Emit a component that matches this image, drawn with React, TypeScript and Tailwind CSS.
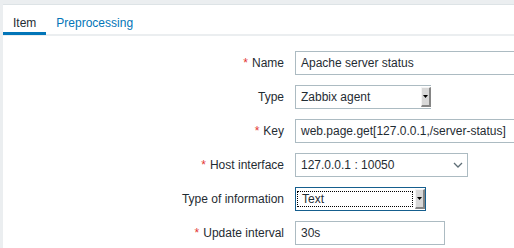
import React from "react";

const Label = ({ text, req }: { text: string; req?: boolean }) => (
  <div className="w-[292px] shrink-0 pr-[11px] text-right whitespace-nowrap">
    {req && <span className="text-[#e33734] mr-[4px]">*</span>}
    {text}
  </div>
);

const NativeArrow = () => (
  <div className="w-[10px] self-stretch my-[1px] flex items-center justify-center bg-[#d8d8d8] border-t border-l border-[#f4f4f4] border-r-2 border-b-2 border-r-[#858585] border-b-[#858585]">
    <svg width="5" height="3" viewBox="0 0 5 3">
      <polygon points="0,0 5,0 2.5,3" fill="#000" />
    </svg>
  </div>
);

const App: React.FC = () => {
  return (
    <div className="w-[514px] h-[248px] overflow-hidden bg-[#ebeef0] pl-[3px] pt-[4px] font-['Liberation_Sans',Arial,sans-serif] text-[12px] text-[#1f2c33]">
      <div className="h-full bg-white border-t border-[#dde3e6]">
        <div className="flex h-[31px] border-b-2 border-[#ebeef0]">
          <div className="h-[30px] px-[10px] pt-[9px] border-b-[3px] border-[#0275b8]">Item</div>
          <div className="h-[30px] px-[10px] pt-[9px] text-[#0275b8]">Preprocessing</div>
        </div>

        <div className="pt-[15px] flex flex-col gap-[10px]">
          <div className="flex items-center h-[24px]">
            <Label text="Name" req />
            <div className="w-[453px] shrink-0 h-[24px] border border-[#acbbc2] px-[5px] flex items-center">
              Apache server status
            </div>
          </div>

          <div className="flex items-center h-[24px]">
            <Label text="Type" />
            <div className="w-[136px] h-[24px] border border-[#acbbc2] border-r-0 pl-[5px] flex items-stretch">
              <span className="flex-1 flex items-center">Zabbix agent</span>
              <NativeArrow />
            </div>
          </div>

          <div className="flex items-center h-[24px]">
            <Label text="Key" req />
            <div className="w-[453px] shrink-0 h-[24px] border border-[#acbbc2] px-[5px] flex items-center whitespace-nowrap">
              web.page.get[127.0.0.1,/server-status]
            </div>
          </div>

          <div className="flex items-center h-[24px]">
            <Label text="Host interface" req />
            <div className="w-[173px] h-[24px] border border-[#acbbc2] pl-[5px] pr-[4px] flex items-center justify-between">
              <span>127.0.0.1 : 10050</span>
              <svg width="10" height="6" viewBox="0 0 10 6">
                <polyline points="1,1 5,5 9,1" fill="none" stroke="#5e6e76" strokeWidth="1.3" />
              </svg>
            </div>
          </div>

          <div className="flex items-center h-[24px]">
            <Label text="Type of information" />
            <div className="w-[131px] h-[24px] border border-[#155e8e] pl-[1px] flex items-stretch">
              <div className="flex-1 my-[3px] mr-[2px] border border-dotted border-black pl-[4px] flex items-center">
                Text
              </div>
              <NativeArrow />
            </div>
          </div>

          <div className="flex items-center h-[24px]">
            <Label text="Update interval" req />
            <div className="w-[150px] h-[24px] border border-[#acbbc2] px-[5px] flex items-center">30s</div>
          </div>
        </div>
      </div>
    </div>
  );
};

export default App;
